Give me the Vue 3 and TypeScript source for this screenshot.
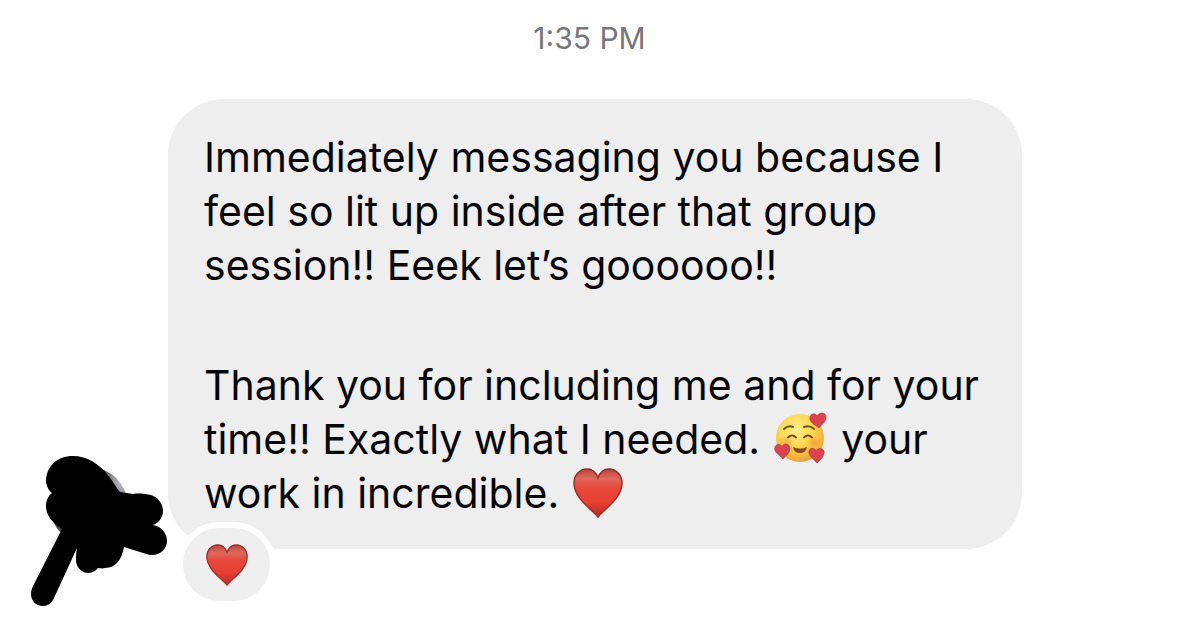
<script setup lang="ts">
type Emoji = 'love' | 'heart'
interface Piece {
  text?: string
  emoji?: Emoji
}

const time = '1:35 PM'

const paragraphs: Piece[][][] = [
  [
    [{ text: 'Immediately messaging you because I' }],
    [{ text: 'feel so lit up inside after that group' }],
    [{ text: 'session!! Eeek let’s goooooo!!' }],
  ],
  [
    [{ text: 'Thank you for including me and for your' }],
    [{ text: 'time!! Exactly what I needed. ' }, { emoji: 'love' }, { text: ' your' }],
    [{ text: 'work in incredible. ' }, { emoji: 'heart' }],
  ],
]
</script>

<template>
  <main class="chat">
    <svg class="defs" aria-hidden="true">
      <defs>
        <linearGradient id="heartFill" x1="0" y1="0" x2="0" y2="1">
          <stop offset="0" stop-color="#b9443b" />
          <stop offset="0.2" stop-color="#e0695d" />
          <stop offset="0.38" stop-color="#e8483a" />
          <stop offset="0.7" stop-color="#e64032" />
          <stop offset="1" stop-color="#b52a24" />
        </linearGradient>
        <linearGradient id="heartEdge" x1="0" y1="0" x2="0" y2="1">
          <stop offset="0" stop-color="#8f2a26" />
          <stop offset="1" stop-color="#a8302a" />
        </linearGradient>
        <radialGradient id="faceFill" cx="0.42" cy="0.32" r="0.7">
          <stop offset="0" stop-color="#fff08a" />
          <stop offset="0.5" stop-color="#fbd751" />
          <stop offset="0.85" stop-color="#f3b238" />
          <stop offset="1" stop-color="#e0a24a" />
        </radialGradient>
        <radialGradient id="blush">
          <stop offset="0" stop-color="#f08030" stop-opacity="0.5" />
          <stop offset="1" stop-color="#f08030" stop-opacity="0" />
        </radialGradient>
        <radialGradient id="photoEdge" gradientUnits="userSpaceOnUse" cx="124" cy="482" r="26">
          <stop offset="0" stop-color="#c8c8d0" />
          <stop offset="0.5" stop-color="#8c8c90" />
          <stop offset="1" stop-color="#4c4c4c" />
        </radialGradient>
        <symbol id="heart" viewBox="0 0 50 50">
          <path
            d="M25 49C20 42 1 31 1 15C1 7 7 1 14 1C19 1 23 4 25 10C27 4 31 1 36 1C43 1 49 7 49 15C49 31 30 42 25 49Z"
            fill="url(#heartFill)"
            stroke="url(#heartEdge)"
            stroke-width="1.5"
          />
        </symbol>
        <symbol id="love" viewBox="0 0 54 52">
          <circle cx="26" cy="26" r="24" fill="url(#faceFill)" />
          <ellipse cx="12" cy="30" rx="8" ry="6" fill="url(#blush)" />
          <ellipse cx="40" cy="30" rx="8" ry="6" fill="url(#blush)" />
          <g fill="none" stroke="#79501c" stroke-linecap="round" stroke-width="2">
            <path d="M10 17Q14 13 19 15" />
            <path d="M30 15Q36 13 40 17" />
            <path d="M14 25.5Q18 21.500 22 25.500" />
            <path d="M30 25.5Q34 21.500 38 25.500" />
          </g>
          <path d="M19 35Q26 38 33 35Q32 41 26 41Q20 41 19 35Z" fill="#854c22" />
          <g fill="#dc4350" stroke="#b83440" stroke-width="0.7">
            <path d="M45 16C41 13 35 10 36 5C37 1 42 1 43 4C45 0 52 0 52 5C52 10 48 12 45 16Z" />
            <path d="M9 47C6 43 -1 40 1 35C3 31 7 32 8 35C10 30 16 32 16 37C15 42 12 43 9 47Z" />
            <path d="M43 51C40 47 34 44 35 39C36 35 41 36 42 39C44 35 51 36 50 41C49 46 46 48 43 51Z" />
          </g>
        </symbol>
      </defs>
    </svg>

    <time class="time">{{ time }}</time>

    <div class="row">
      <svg class="avatar" viewBox="0 456 168 151" role="img" aria-label="Sender">
        <circle cx="89" cy="506" r="39" fill="url(#photoEdge)" />
        <path
          d="M73 456C87 456 99 464 107 474C113 481 117 489 120 492L133 494C139 493 146 494 151 495C158 497 163 504 163 511C163 517 159 523 153 525C161 526 167 533 167 541C167 548 161 555 152 555C148 555 144 553 140 552L124 547C122 559 116 568 105 568C102 569 100 568 98 568C95 572 91 573 87 573C81 572 76 567 76 560C76 556 76 553 77 548L54 598C52 603 48 606 43 606C36 606 31 601 31 594C31 591 32 588 33 586L62 529C52 523 46 515 46 506C46 501 48 496 52 493C48 490 46 485 46 480C47 466 57 456 73 456Z"
          fill="#000"
        />
      </svg>

      <article class="bubble">
        <p v-for="(lines, p) in paragraphs" :key="p" class="paragraph">
          <span v-for="(line, l) in lines" :key="l" class="line">
            <template v-for="(piece, i) in line" :key="i">
              <svg
                v-if="piece.emoji"
                class="emoji"
                :class="piece.emoji"
                role="img"
                :aria-label="piece.emoji"
              >
                <use :href="`#${piece.emoji}`" />
              </svg>
              <template v-else>{{ piece.text }}</template>
            </template>
          </span>
        </p>
        <button class="reaction" type="button" aria-label="Heart reaction">
          <svg class="reaction-heart" aria-hidden="true"><use href="#heart" /></svg>
        </button>
      </article>
    </div>
  </main>
</template>

<style>
body {
  background: #fff;
}
</style>

<style scoped>
.chat {
  box-sizing: border-box;
  padding: 20px 0 26px;
  font-family: Inter, 'Liberation Sans', sans-serif;
  color: #060606;
}

.defs {
  position: absolute;
  width: 0;
  height: 0;
}

.time {
  display: block;
  margin-bottom: 43px;
  font-size: 30px;
  line-height: 36px;
  text-align: center;
  color: #77777a;
}

.row {
  display: grid;
  grid-template-columns: 168px minmax(0, 1fr);
  padding-right: 157px;
}

.avatar {
  align-self: end;
  width: 168px;
  height: 151px;
}

.bubble {
  position: relative;
  margin-bottom: 58px;
  padding: 31px 36px 29px;
  border-radius: 56px;
  background: #eee;
}

.paragraph {
  margin: 0;
  font-size: 41px;
  line-height: 54px;
}

.paragraph + .paragraph {
  margin-top: 66px;
}

.line {
  display: block;
  white-space: pre-wrap;
}

.emoji {
  margin: -10px 2px;
  vertical-align: 0;
}

.emoji.love {
  width: 54px;
  height: 52px;
}

.emoji.heart {
  width: 50px;
  height: 50px;
}

.reaction {
  position: absolute;
  bottom: -58px;
  left: 9px;
  display: flex;
  align-items: center;
  justify-content: center;
  box-sizing: border-box;
  width: 99px;
  height: 85px;
  padding: 0;
  border: 6px solid #fff;
  border-radius: 43px;
  background: #efefef;
}

.reaction-heart {
  width: 42px;
  height: 42px;
}
</style>
